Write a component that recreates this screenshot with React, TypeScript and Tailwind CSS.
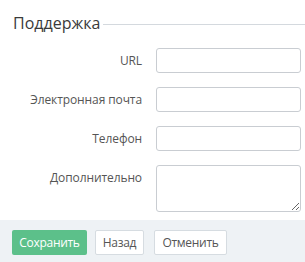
export default function App() {
  const rows = [
    { label: 'URL', kind: 'input' },
    { label: 'Электронная почта', kind: 'input' },
    { label: 'Телефон', kind: 'input' },
    { label: 'Дополнительно', kind: 'textarea' },
  ];

  return (
    <div
      className="w-[305px] h-[262px] bg-white text-[#555] overflow-hidden"
      style={{ fontFamily: '"Open Sans", sans-serif' }}
    >
      <div className="flex items-center pl-[13px] pt-[10px]">
        <span className="text-[16px] leading-[26px] text-[#3a3a3a]">Поддержка</span>
        <div className="flex-1 border-t border-[#d4d9de] ml-[3px] mt-[2px]" />
      </div>

      <div className="flex flex-col gap-[14px] pt-[12px] pr-[4px] pb-[8px]">
        {rows.map((row) => (
          <div key={row.label} className="flex items-start">
            <label className="w-[142px] shrink-0 text-right text-[12px] leading-[25px] text-[#555] tracking-[-0.1px]">
              {row.label}
            </label>
            <div className="ml-[14px] flex-1">
              {row.kind === 'input' ? (
                <input className="block w-full h-[25px] border border-[#c9cdd2] rounded-[3px] px-2 text-[12px] outline-none" />
              ) : (
                <textarea className="block w-full h-[47px] border border-[#c9cdd2] rounded-[3px] px-2 text-[12px] outline-none" />
              )}
            </div>
          </div>
        ))}
      </div>

      <div className="bg-[#eef2f5] h-[42px] flex items-start pt-[10px] pl-[12px]">
        <button className="h-[25px] w-[75px] rounded-[2px] bg-[#5cc08a] text-white text-[12px] tracking-[-0.3px]">
          Сохранить
        </button>
        <button className="ml-[8px] h-[25px] w-[49px] rounded-[2px] bg-white border border-[#d6dce1] text-[#555] text-[12px] tracking-[-0.3px]">
          Назад
        </button>
        <button className="ml-[10px] h-[25px] w-[73px] rounded-[2px] bg-white border border-[#d6dce1] text-[#555] text-[12px] tracking-[-0.3px]">
          Отменить
        </button>
      </div>
    </div>
  );
}
